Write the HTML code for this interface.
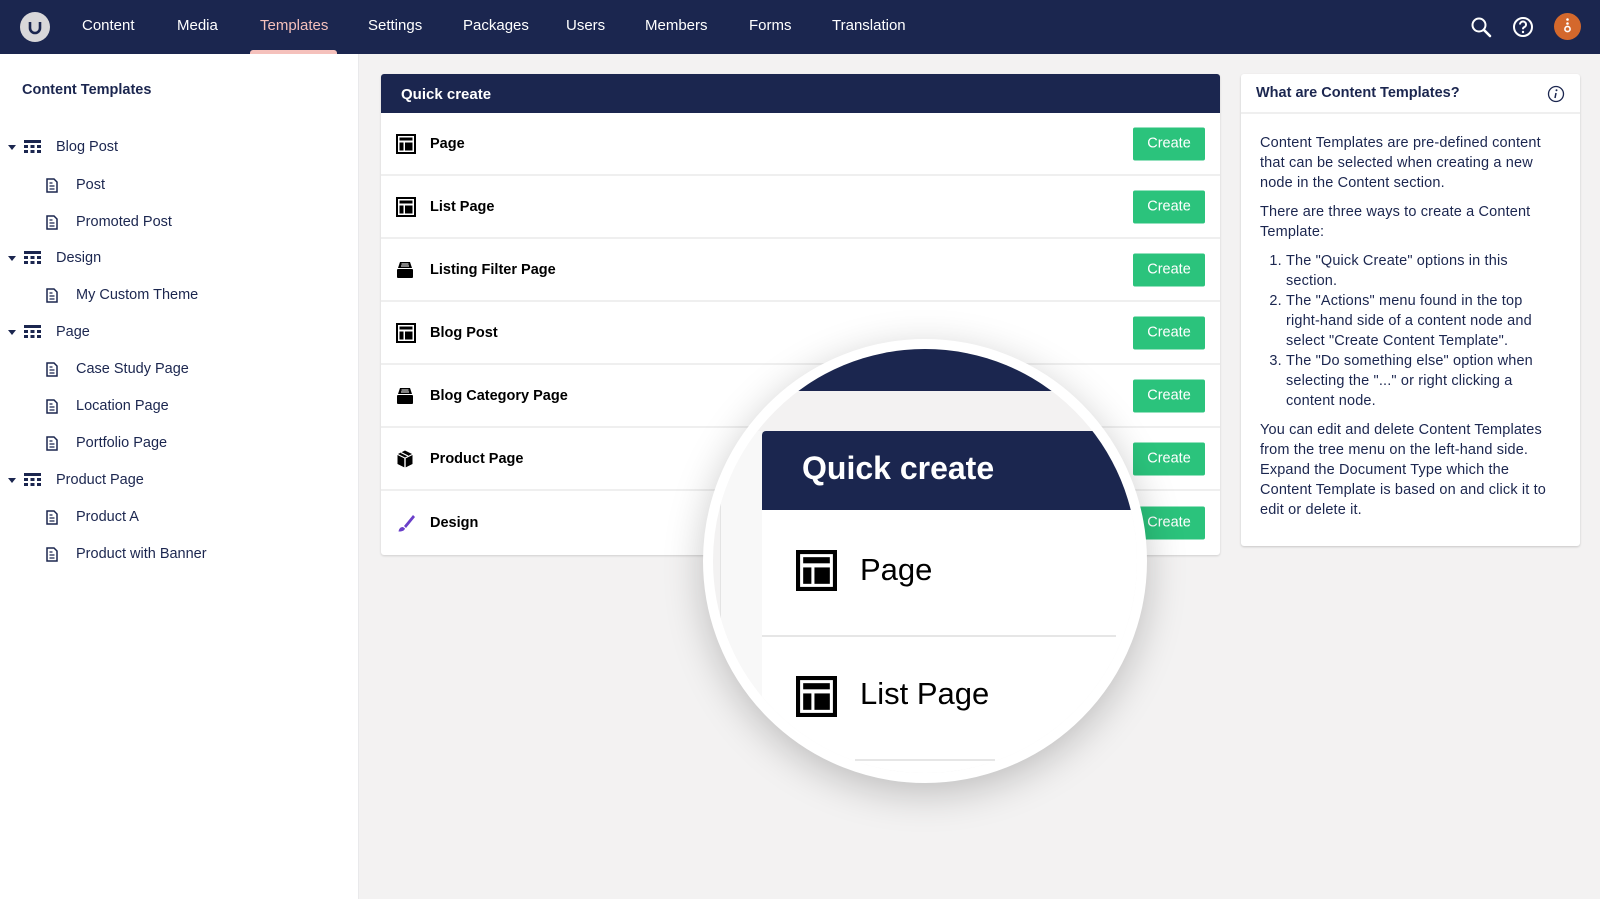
<!DOCTYPE html>
<html><head><meta charset="utf-8"><style>
*{margin:0;padding:0;box-sizing:border-box}
body{width:1600px;height:899px;overflow:hidden;background:#f3f2f2;font-family:"Liberation Sans",sans-serif;color:#1b264f;position:relative}
.a{position:absolute}
#nav{left:0;top:0;width:1600px;height:54px;background:#1b264f}
.ni{position:absolute;top:17px;font-size:15px;color:#fff;white-space:nowrap}
#side{left:0;top:54px;width:359px;height:845px;background:#fff;border-right:1px solid #e9e9eb}
.tr{position:absolute;font-size:14.5px;color:#1b264f;white-space:nowrap;transform:translateY(-50%)}
.car{position:absolute;width:0;height:0;border-left:4px solid transparent;border-right:4px solid transparent;border-top:5px solid #1b264f}
.qp{left:381px;top:74px;width:839px;height:481px;background:#fff;box-shadow:0 1px 2px rgba(0,0,0,.15);border-radius:3px}
.qh{left:381px;top:74px;width:839px;height:39px;background:#1b264f;border-radius:3px 3px 0 0;color:#fff;font-weight:bold;font-size:15px;padding:12px 20px 0}
.row{position:absolute;left:381px;width:839px;height:63px;border-bottom:2px solid #efefef}
.row .l{position:absolute;left:49px;top:50%;transform:translateY(-50%);font-weight:bold;font-size:14.5px;color:#000}
.row svg{position:absolute;left:15px;top:50%;transform:translateY(-50%)}
.btn{position:absolute;left:752px;top:50%;transform:translateY(-50%);width:72px;height:33px;background:#2bc37c;color:#fff;font-size:14.5px;text-align:center;line-height:33px;border-radius:2px}
.rp{left:1241px;top:74px;width:339px;height:472px;background:#fff;box-shadow:0 1px 2px rgba(0,0,0,.18);border-radius:3px}
.rp .h{height:40px;border-bottom:2px solid #efefef;font-weight:bold;font-size:14.5px;padding:11px 15px}
.rp .b{padding:19px 26px 18px 19px;font-size:14.5px;line-height:20px;color:#1b264f;letter-spacing:0.15px}
.rp p{margin-bottom:9px}
.rp ol{margin-left:26px;margin-bottom:9px}
#mag{left:703px;top:339px;width:444px;height:444px;border-radius:50%;border:10px solid #fff;overflow:hidden;background:#f3f2f2;box-shadow:0 10px 40px rgba(0,0,0,.22)}
</style></head><body>
<div id="nav" class="a">
 <div class="a" style="left:20px;top:12px;width:30px;height:30px;border-radius:50%;background:#d8d7d9"></div>
 <svg class="a" style="left:27px;top:19px" width="16" height="16" viewBox="0 0 16 16"><path d="M3 3v6a5 5 0 0 0 10 0V3" fill="none" stroke="#1b264f" stroke-width="2.6"/></svg>
 <span class="ni" style="left:82px">Content</span>
 <span class="ni" style="left:177px">Media</span>
 <span class="ni" style="left:260px;color:#f5c1bc">Templates</span>
 <span class="ni" style="left:368px">Settings</span>
 <span class="ni" style="left:463px">Packages</span>
 <span class="ni" style="left:566px">Users</span>
 <span class="ni" style="left:645px">Members</span>
 <span class="ni" style="left:749px">Forms</span>
 <span class="ni" style="left:832px">Translation</span>
 <div class="a" style="left:250px;top:50px;width:87px;height:4px;background:#f5c1bc;border-radius:3px 3px 0 0"></div>
 <svg class="a" style="left:1470px;top:16px" width="22" height="22" viewBox="0 0 22 22"><circle cx="9" cy="9" r="6.5" fill="none" stroke="#fff" stroke-width="2"/><path d="M14 14l6 6" stroke="#fff" stroke-width="2.6" stroke-linecap="round"/></svg>
 <svg class="a" style="left:1512px;top:16px" width="22" height="22" viewBox="0 0 22 22"><circle cx="11" cy="11" r="9" fill="none" stroke="#fff" stroke-width="2"/><path d="M8 8.5a3 3 0 1 1 4 2.8c-.8.4-1 .9-1 1.9" fill="none" stroke="#fff" stroke-width="2"/><circle cx="11" cy="16" r="1.2" fill="#fff"/></svg>
 <div class="a" style="left:1554px;top:13px;width:27px;height:27px;border-radius:50%;background:#d4682c"></div>
 <svg class="a" style="left:1562px;top:17px" width="11" height="19" viewBox="0 0 11 19"><circle cx="5.5" cy="2.5" r="1.3" fill="#fff"/><circle cx="5.5" cy="6.5" r="1.3" fill="#fff"/><circle cx="5.5" cy="12" r="2.6" fill="none" stroke="#fff" stroke-width="1.6"/></svg>
</div>

<div id="side" class="a"></div>
<div class="a" style="left:22px;top:82px;font-weight:bold;font-size:14.5px">Content Templates</div>
<svg width="0" height="0" style="position:absolute"><defs>
<g id="grid"><rect x="0" y="0" width="17" height="3" fill="#1b264f"/><rect x="0" y="5" width="4" height="3" fill="#1b264f"/><rect x="6.5" y="5" width="4" height="3" fill="#1b264f"/><rect x="13" y="5" width="4" height="3" fill="#1b264f"/><rect x="0" y="10" width="4" height="3" fill="#1b264f"/><rect x="6.5" y="10" width="4" height="3" fill="#1b264f"/><rect x="13" y="10" width="4" height="3" fill="#1b264f"/></g>
<g id="doc"><path d="M1 1h7l3 3v10H1z" fill="none" stroke="#1b264f" stroke-width="1.5"/><path d="M3.5 5h3M3.5 8h5M3.5 11h5" stroke="#1b264f" stroke-width="1.2"/></g>
<g id="pg"><rect x="1" y="1" width="18" height="18" fill="none" stroke="#000" stroke-width="2"/><rect x="3.5" y="3.5" width="13" height="3" fill="#000"/><rect x="3.5" y="8.5" width="4" height="8" fill="#000"/><rect x="9" y="8.5" width="7.5" height="8" fill="#000"/></g>
<g id="arc"><path d="M4 1h10l2 6H2z" fill="#000"/><path d="M5.5 3h7M5 5h8" stroke="#fff" stroke-width="1"/><rect x="1" y="8" width="16" height="9" rx="1" fill="#000"/></g>
</defs></svg>
<div class="car" style="left:8px;top:145px"></div><svg class="a" style="left:24px;top:140px" width="17" height="13"><use href="#grid"/></svg><span class="tr" style="left:56px;top:147px">Blog Post</span>
<svg class="a" style="left:46px;top:178px" width="12" height="15"><use href="#doc"/></svg><span class="tr" style="left:76px;top:185px">Post</span>
<svg class="a" style="left:46px;top:215px" width="12" height="15"><use href="#doc"/></svg><span class="tr" style="left:76px;top:222px">Promoted Post</span>
<div class="car" style="left:8px;top:256px"></div><svg class="a" style="left:24px;top:251px" width="17" height="13"><use href="#grid"/></svg><span class="tr" style="left:56px;top:258px">Design</span>
<svg class="a" style="left:46px;top:288px" width="12" height="15"><use href="#doc"/></svg><span class="tr" style="left:76px;top:295px">My Custom Theme</span>
<div class="car" style="left:8px;top:330px"></div><svg class="a" style="left:24px;top:325px" width="17" height="13"><use href="#grid"/></svg><span class="tr" style="left:56px;top:332px">Page</span>
<svg class="a" style="left:46px;top:362px" width="12" height="15"><use href="#doc"/></svg><span class="tr" style="left:76px;top:369px">Case Study Page</span>
<svg class="a" style="left:46px;top:399px" width="12" height="15"><use href="#doc"/></svg><span class="tr" style="left:76px;top:406px">Location Page</span>
<svg class="a" style="left:46px;top:436px" width="12" height="15"><use href="#doc"/></svg><span class="tr" style="left:76px;top:443px">Portfolio Page</span>
<div class="car" style="left:8px;top:478px"></div><svg class="a" style="left:24px;top:473px" width="17" height="13"><use href="#grid"/></svg><span class="tr" style="left:56px;top:480px">Product Page</span>
<svg class="a" style="left:46px;top:510px" width="12" height="15"><use href="#doc"/></svg><span class="tr" style="left:76px;top:517px">Product A</span>
<svg class="a" style="left:46px;top:547px" width="12" height="15"><use href="#doc"/></svg><span class="tr" style="left:76px;top:554px">Product with Banner</span>

<div class="a qp"></div>
<div class="a qh">Quick create</div>
<div class="row" style="top:113px"><svg width="20" height="20"><use href="#pg"/></svg><span class="l">Page</span><div class="btn">Create</div></div>
<div class="row" style="top:176px"><svg width="20" height="20"><use href="#pg"/></svg><span class="l">List Page</span><div class="btn">Create</div></div>
<div class="row" style="top:239px"><svg width="18" height="18"><use href="#arc"/></svg><span class="l">Listing Filter Page</span><div class="btn">Create</div></div>
<div class="row" style="top:302px"><svg width="20" height="20"><use href="#pg"/></svg><span class="l">Blog Post</span><div class="btn">Create</div></div>
<div class="row" style="top:365px"><svg width="18" height="18"><use href="#arc"/></svg><span class="l">Blog Category Page</span><div class="btn">Create</div></div>
<div class="row" style="top:428px"><svg width="18" height="19" viewBox="0 0 18 19"><path d="M9 1l7 3.5-7 3.5-7-3.5z" fill="#000"/><path d="M1.5 5.5l6.8 3.4v9L1.5 14.5zM16.5 5.5l-6.8 3.4v9l6.8-3.4z" fill="#000"/><path d="M5 3l7 3.5" stroke="#fff" stroke-width="1.2"/></svg><span class="l">Product Page</span><div class="btn">Create</div></div>
<div class="row" style="top:491px;border-bottom:none"><svg width="20" height="20" viewBox="0 0 20 20"><path d="M17 2L8 13l2 2L19 4z" fill="#6a3fc9"/><path d="M7 14c-3 0-4 2-4.5 4.5 2.5.2 6-.5 6.5-3z" fill="#6a3fc9"/></svg><span class="l">Design</span><div class="btn">Create</div></div>

<div class="a rp"><div class="h">What are Content Templates?</div>
<svg class="a" style="left:306px;top:11px" width="18" height="18" viewBox="0 0 18 18"><circle cx="9" cy="9" r="7.5" fill="none" stroke="#1b264f" stroke-width="1.3"/><circle cx="9.5" cy="5.2" r="1" fill="#1b264f"/><path d="M9 8l-1 5" stroke="#1b264f" stroke-width="1.5"/></svg>
<div class="b">
<p>Content Templates are pre-defined content that can be selected when creating a new node in the Content section.</p>
<p>There are three ways to create a Content Template:</p>
<ol><li>The "Quick Create" options in this section.</li><li>The "Actions" menu found in the top right-hand side of a content node and select "Create Content Template".</li><li>The "Do something else" option when selecting the "..." or right clicking a content node.</li></ol>
<p>You can edit and delete Content Templates from the tree menu on the left-hand side. Expand the Document Type which the Content Template is based on and click it to edit or delete it.</p>
</div></div>

<div id="mag" class="a">
 <div class="a" style="left:0;top:0;width:430px;height:42px;background:#1b264f"></div>
 <div class="a" style="left:7px;top:82px;width:42px;height:360px;background:#f8f8f8;border-left:1px solid #e4e4e4"></div>
 <div class="a" style="left:49px;top:161px;width:380px;height:300px;background:#fff"></div>
 <div class="a" style="left:49px;top:82px;width:380px;height:79px;background:#1b264f;border-radius:4px 0 0 0"></div>
 <div class="a" style="left:89px;top:101px;font-size:32px;font-weight:bold;color:#fff;white-space:nowrap">Quick create</div>
 <svg class="a" style="left:83px;top:201px" width="41" height="41" viewBox="0 0 20 20"><use href="#pg"/></svg>
 <div class="a" style="left:147px;top:203px;font-size:31px;color:#000;white-space:nowrap">Page</div>
 <div class="a" style="left:49px;top:286px;width:354px;height:2px;background:#e6e6e6"></div>
 <svg class="a" style="left:83px;top:327px" width="41" height="41" viewBox="0 0 20 20"><use href="#pg"/></svg>
 <div class="a" style="left:147px;top:327px;font-size:31px;color:#000;white-space:nowrap">List Page</div>
 <div class="a" style="left:142px;top:410px;width:140px;height:2px;background:#e6e6e6"></div>
</div>
</body></html>
